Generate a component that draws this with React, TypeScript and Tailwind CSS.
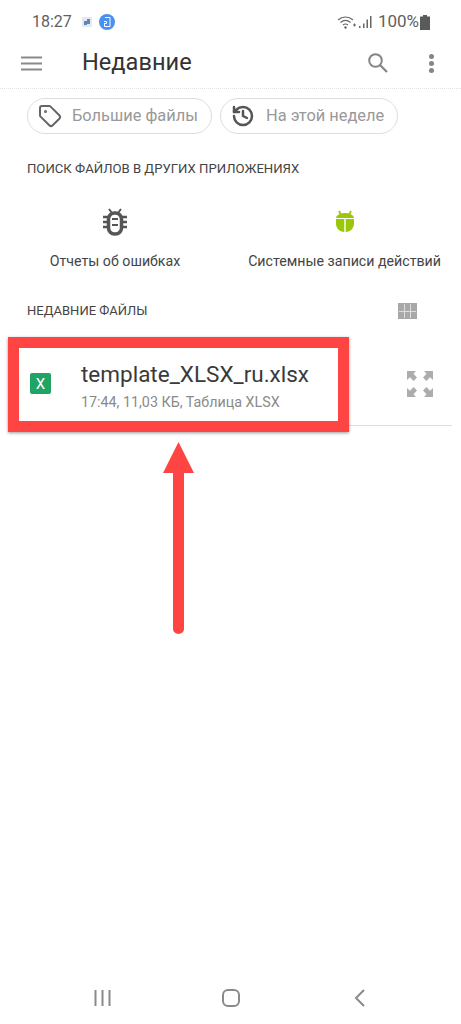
import { History, Tag } from 'lucide-react'

const font = { fontFamily: 'Roboto, "Noto Sans", sans-serif' }

function StatusBar() {
  return (
    <div className="flex h-[42px] items-center justify-between pl-[32px] pr-[31px] pt-[2px] text-[16px] text-[#5f5f5f]">
      <div className="flex items-center">
        <span>18:27</span>
        <svg viewBox="0 0 10 10" className="ml-[10px] h-[10px] w-[10px]">
          <rect width="10" height="10" rx="1" fill="#e8e8e8" />
          <path d="M2 4h3v4H2zM5 2h3v5H5z" fill="#5b86c4" />
        </svg>
        <svg viewBox="0 0 16 16" className="ml-[7px] h-[16px] w-[16px]">
          <circle cx="8" cy="8" r="8" fill="#4a90f0" />
          <path d="M6 3.500h5v9H5.500v-3M5 7.500h2.500v2H5" fill="none" stroke="#fff" strokeWidth="1" />
        </svg>
      </div>
      <div className="flex items-center">
        <svg viewBox="0 0 20 14" className="h-[14px] w-[20px]">
          <path d="M1 5c4.500-4 10.500-4 15 0M3.500 7.500c3-2.600 7-2.600 10 0M6 10c1.500-1.200 3.500-1.200 5 0" fill="none" stroke="#666" strokeWidth="1.200" />
          <circle cx="8.500" cy="12.500" r="1.200" fill="#666" />
          <path d="M16 10h3M17.500 8.500v3" stroke="#666" strokeWidth="1" />
        </svg>
        <svg viewBox="0 0 14 14" className="ml-[1px] h-[14px] w-[14px]">
          <path d="M1 11h1.500v2H1zM5 8.500h1.500V13H5zM8.500 4.500H10V13H8.500zM12 1h1.500v12H12z" fill="#666" />
        </svg>
        <span className="ml-[6px] text-[17px]">100%</span>
        <svg viewBox="0 0 10 15" className="ml-[1px] h-[15px] w-[10px]">
          <path d="M3 0h4v1.500h3V15H0V1.500h3z" fill="#5a5a5a" />
        </svg>
      </div>
    </div>
  )
}

function Header() {
  return (
    <div className="flex h-[47px] items-center border-b border-dotted border-[#e2e2e2] pl-[21px] pr-[27px] pb-[4px]">
      <svg viewBox="0 0 21 15" className="h-[15px] w-[21px]">
        <path d="M0 1.500h21M0 7.500h21M0 13.500h21" stroke="#8a8a8a" strokeWidth="2" />
      </svg>
      <div className="ml-[40px] flex-1 text-[23.600px] text-[#333]">Недавние</div>
      <svg viewBox="0 0 20 20" className="h-[20px] w-[20px]">
        <circle cx="7.500" cy="7.500" r="6.300" fill="none" stroke="#858585" strokeWidth="2" />
        <path d="M12 12l7 7" stroke="#858585" strokeWidth="2.200" />
      </svg>
      <div className="ml-[41px] flex flex-col gap-[2px]">
        <div className="h-[5px] w-[5px] rounded-full bg-[#858585]" />
        <div className="h-[5px] w-[5px] rounded-full bg-[#858585]" />
        <div className="h-[5px] w-[5px] rounded-full bg-[#858585]" />
      </div>
    </div>
  )
}

function Chips() {
  return (
    <div className="mt-[9px] flex gap-[8px] pl-[27px]">
      <div className="flex h-[36px] w-[185px] items-center rounded-full border border-[#dedede] pl-[10px]">
        <Tag className="h-[24px] w-[24px] text-[#666]" strokeWidth={2} />
        <span className="ml-[10px] text-[16.400px] text-[#999]">Большие файлы</span>
      </div>
      <div className="flex h-[36px] w-[178px] items-center rounded-full border border-[#dedede] pl-[10px]">
        <History className="h-[24px] w-[24px] text-[#555]" strokeWidth={2.500} />
        <span className="ml-[11px] text-[16.400px] text-[#999]">На этой неделе</span>
      </div>
    </div>
  )
}

function BugIcon() {
  return (
    <svg viewBox="0 0 26 28" className="h-[28px] w-[26px]">
      <path d="M7 1l3 4M19 1l-3 4" stroke="#555" strokeWidth="2" />
      <path d="M1 9h5M1 14h5M1 19h5M20 9h5M20 14h5M20 19h5" stroke="#555" strokeWidth="2.500" />
      <rect x="6.500" y="5" width="13" height="21" rx="6" fill="none" stroke="#555" strokeWidth="3.500" />
      <path d="M10 11h6M10 17h6" stroke="#555" strokeWidth="2" />
    </svg>
  )
}

function DroidIcon() {
  return (
    <svg viewBox="0 0 20 24" className="h-[24px] w-[20px]">
      <path d="M4 1l2 4M16 1l-2 4" stroke="#9bc70a" strokeWidth="1.800" />
      <path d="M1 8a9 5 0 0 1 18 0z" fill="#9bc70a" />
      <path d="M1 9h8.300v13C4.500 22 1 18 1 13.500zM10.700 9H19v4.500c0 4.500-3.500 8.500-8.300 8.500z" fill="#9bc70a" />
    </svg>
  )
}

function Apps() {
  return (
    <div className="mt-[30px] flex pl-[27px] pr-[20px] text-[14.200px] text-[#444]">
      <div className="flex w-[176px] flex-col items-center">
        <div className="flex h-[30px] items-center"><BugIcon /></div>
        <span className="mt-[14px] whitespace-nowrap">Отчеты об ошибках</span>
      </div>
      <div className="ml-auto flex flex-col items-center">
        <div className="flex h-[30px] items-center"><DroidIcon /></div>
        <span className="mt-[14px] whitespace-nowrap">Системные записи действий</span>
      </div>
    </div>
  )
}

function ExpandIcon() {
  return (
    <svg viewBox="0 0 26 26" className="h-[26px] w-[26px]">
      <g fill="#adadad">
        <path d="M0 0h9L6.500 2.800 10 6.500 6.500 10 3 6.300 0 9zM26 0h-9l2.500 2.800L16 6.500 19.500 10 23 6.300 26 9zM0 26h9l-2.500-2.800L10 19.500 6.500 16 3 19.700 0 17zM26 26h-9l2.500-2.800L16 19.500 19.500 16 23 19.700 26 17z" />
      </g>
    </svg>
  )
}

function FileRow() {
  return (
    <div className="relative mt-[22px]">
      <div className="ml-[10px] mr-[9px] flex h-[84px] items-center border-b border-[#dcdcdc] pl-[20px] pr-[19px]">
        <div className="flex h-[21px] w-[21px] items-center justify-center rounded-[2px] bg-[#1fa463] text-[15px] text-white">X</div>
        <div className="ml-[30px] flex-1 pt-[4px]">
          <div className="text-[22.500px] leading-[28px] text-[#3a3a3a]">template_XLSX_ru.xlsx</div>
          <div className="mt-[5px] text-[14.300px] leading-[18px] text-[#8a8a8a]">17:44, 11,03 КБ, Таблица XLSX</div>
        </div>
        <ExpandIcon />
      </div>
      <div className="absolute left-[8px] top-[-5px] h-[95px] w-[341px] border-[11px] border-[#ff4444] shadow-[0_1px_3px_rgba(0,0,0,0.4)]" />
    </div>
  )
}

function Arrow() {
  return (
    <svg viewBox="0 0 31 192" className="absolute left-[163px] top-[442px] h-[192px] w-[31px]">
      <path d="M15.500 0L31 31H21V187a5.500 5 0 0 1-11 0V31H0z" fill="#ff4444" />
    </svg>
  )
}

function NavBar() {
  return (
    <div className="mt-auto flex h-[50px] items-center pb-[3px]">
      <svg viewBox="0 0 17 16" className="ml-[94px] h-[16px] w-[17px]">
        <path d="M1.500 0v16M8.500 0v16M15.500 0v16" stroke="#8a8a8a" strokeWidth="2" />
      </svg>
      <div className="ml-[111px] h-[18px] w-[18px] rounded-[6px] border-2 border-[#8a8a8a]" />
      <svg viewBox="0 0 11 18" className="ml-[114px] h-[18px] w-[11px]">
        <path d="M10 1L2 9l8 8" fill="none" stroke="#8a8a8a" strokeWidth="2" />
      </svg>
    </div>
  )
}

export default function App() {
  return (
    <div style={font} className="relative flex h-[1024px] w-[461px] flex-col overflow-hidden bg-white">
      <StatusBar />
      <Header />
      <Chips />
      <div className="mt-[27px] pl-[27px] text-[13.150px] leading-[16px] text-[#444]">ПОИСК ФАЙЛОВ В ДРУГИХ ПРИЛОЖЕНИЯХ</div>
      <Apps />
      <div className="mt-[30px] flex items-center pl-[27px] pr-[44px] text-[13px] leading-[18px] text-[#444]">
        <span className="flex-1">НЕДАВНИЕ ФАЙЛЫ</span>
        <div className="grid h-[16px] w-[19px] grid-cols-3 gap-[1px] border border-[#a8a8a8] bg-[#dddddd]">
          {[0, 1, 2, 3, 4, 5].map((i) => (
            <div key={i} className="bg-[#a8a8a8]" />
          ))}
        </div>
      </div>
      <FileRow />
      <Arrow />
      <NavBar />
    </div>
  )
}
